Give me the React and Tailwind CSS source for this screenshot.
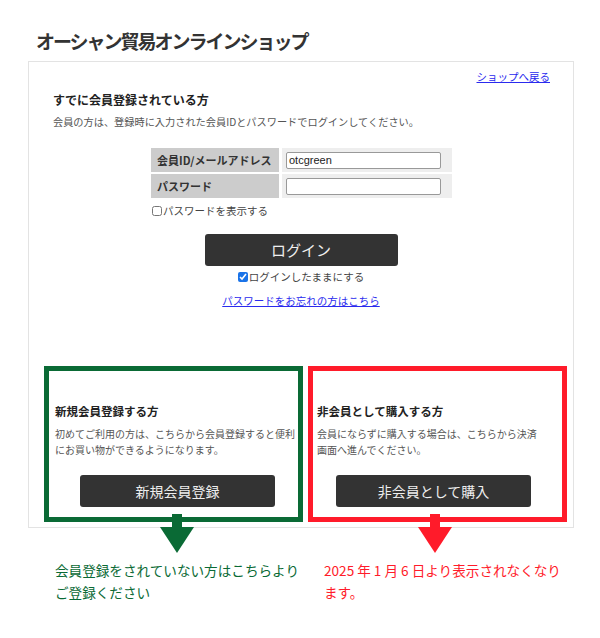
import React from "react";

function Arrow({ color }) {
  return (
    <svg width="34" height="40" viewBox="0 0 34 40">
      <rect x="12" y="0" width="10" height="14" fill={color} />
      <polygon points="0,13 34,13 17,39" fill={color} />
    </svg>
  );
}

export default function App() {
  return (
    <div className="w-[600px] h-[638px] bg-white text-[#333] font-['Noto_Sans_CJK_JP',sans-serif] relative overflow-hidden">
      <h1 className="pt-[28px] pl-[36px] text-[19px] leading-[26px] font-bold tracking-[-2px] text-[#333]">
        オーシャン貿易オンラインショップ
      </h1>

      <div className="relative mt-[7px] ml-[28px] w-[546px] h-[467px] border border-[#e3e3e3] flex flex-col">
        <div className="pt-[7px] pr-[23px] flex justify-end">
          <a href="#" className="text-[10.5px] leading-[16px] text-[#2a2aee] underline">
            ショップへ戻る
          </a>
        </div>
        <div className="pl-[24px] mt-[7px] text-[12px] leading-[16px] font-bold text-[#222]">
          すでに会員登録されている方
        </div>
        <div className="pl-[24px] mt-[6px] text-[10.2px] leading-[16px] text-[#555]">
          会員の方は、登録時に入力された会員IDとパスワードでログインしてください。
        </div>

        <div className="mt-[18px] ml-[122px] w-[301px] grid grid-cols-[128px_170px] gap-x-[3px] gap-y-[2px]">
          <div className="h-[24px] bg-[#cccccc] flex items-center pl-[6px] text-[11px] font-bold text-[#333]">
            会員ID/メールアドレス
          </div>
          <div className="h-[24px] bg-[#eeeeee] flex items-center pl-[4px]">
            <div className="w-[155px] h-[17px] bg-white border border-[#999] rounded-[2px] flex items-center pl-[2px] text-[11px] text-[#222] font-['Liberation_Sans',sans-serif]">
              otcgreen
            </div>
          </div>
          <div className="h-[24px] bg-[#cccccc] flex items-center pl-[6px] text-[11px] font-bold text-[#333]">
            パスワード
          </div>
          <div className="h-[24px] bg-[#eeeeee] flex items-center pl-[4px]">
            <div className="w-[155px] h-[17px] bg-white border border-[#999] rounded-[2px]" />
          </div>
        </div>

        <label className="mt-[5px] ml-[123px] flex items-center text-[10.5px] leading-[16px] text-[#444]">
          <input type="checkbox" className="w-[10px] h-[10px] m-0 mr-[1px]" />
          パスワードを表示する
        </label>

        <div className="mt-[15px] flex justify-center">
          <button className="w-[193px] h-[32px] bg-[#333333] rounded-[3px] text-[15px] text-[#eeeeee]">
            ログイン
          </button>
        </div>

        <label className="mt-[3px] flex items-center justify-center text-[10.5px] leading-[16px] text-[#444]">
          <input type="checkbox" defaultChecked className="w-[10px] h-[10px] m-0 mr-[1px] accent-[#1a73e8]" />
          ログインしたままにする
        </label>

        <div className="mt-[8px] flex justify-center">
          <a href="#" className="text-[10.5px] leading-[16px] text-[#2a2aee] underline">
            パスワードをお忘れの方はこちら
          </a>
        </div>

        <div className="mt-[57px] pl-[15px] flex gap-[5px]">
          <div className="w-[259px] h-[156px] border-[5px] border-[#0a6a35] overflow-hidden pl-[6px] pt-[32px]">
            <div className="text-[11.5px] leading-[16px] font-bold text-[#222]">新規会員登録する方</div>
            <div className="mt-[7px] text-[10px] leading-[16px] text-[#555] whitespace-nowrap">
              初めてご利用の方は、こちらから会員登録すると便利
              <br />
              にお買い物ができるようになります。
            </div>
            <button className="mt-[17px] ml-[25px] w-[195px] h-[32px] bg-[#333333] rounded-[3px] text-[14px] text-[#eeeeee]">
              新規会員登録
            </button>
          </div>
          <div className="w-[259px] h-[156px] border-[5px] border-[#ff1b2a] overflow-hidden pl-[4px] pt-[32px]">
            <div className="text-[11.5px] leading-[16px] font-bold text-[#222]">非会員として購入する方</div>
            <div className="mt-[7px] text-[10px] leading-[16px] text-[#555] whitespace-nowrap">
              会員にならずに購入する場合は、こちらから決済
              <br />
              画面へ進んでください。
            </div>
            <button className="mt-[17px] ml-[19px] w-[195px] h-[32px] bg-[#333333] rounded-[3px] text-[14px] text-[#eeeeee]">
              非会員として購入
            </button>
          </div>
        </div>
      </div>

      <div className="absolute left-[160px] top-[514px]">
        <Arrow color="#0a6a35" />
      </div>
      <div className="absolute left-[418px] top-[514px]">
        <Arrow color="#ff1b2a" />
      </div>

      <div className="mt-[31px] flex">
        <div className="pl-[55px] w-[324px] text-[13.6px] leading-[22px] font-normal text-[#0a6a35]">
          会員登録をされていない方はこちらより
          <br />
          ご登録ください
        </div>
        <div className="text-[13.6px] leading-[22px] font-normal text-[#ff1b2a] whitespace-nowrap">
          2025 年 1 月 6 日より表示されなくなり
          <br />
          ます。
        </div>
      </div>
    </div>
  );
}
